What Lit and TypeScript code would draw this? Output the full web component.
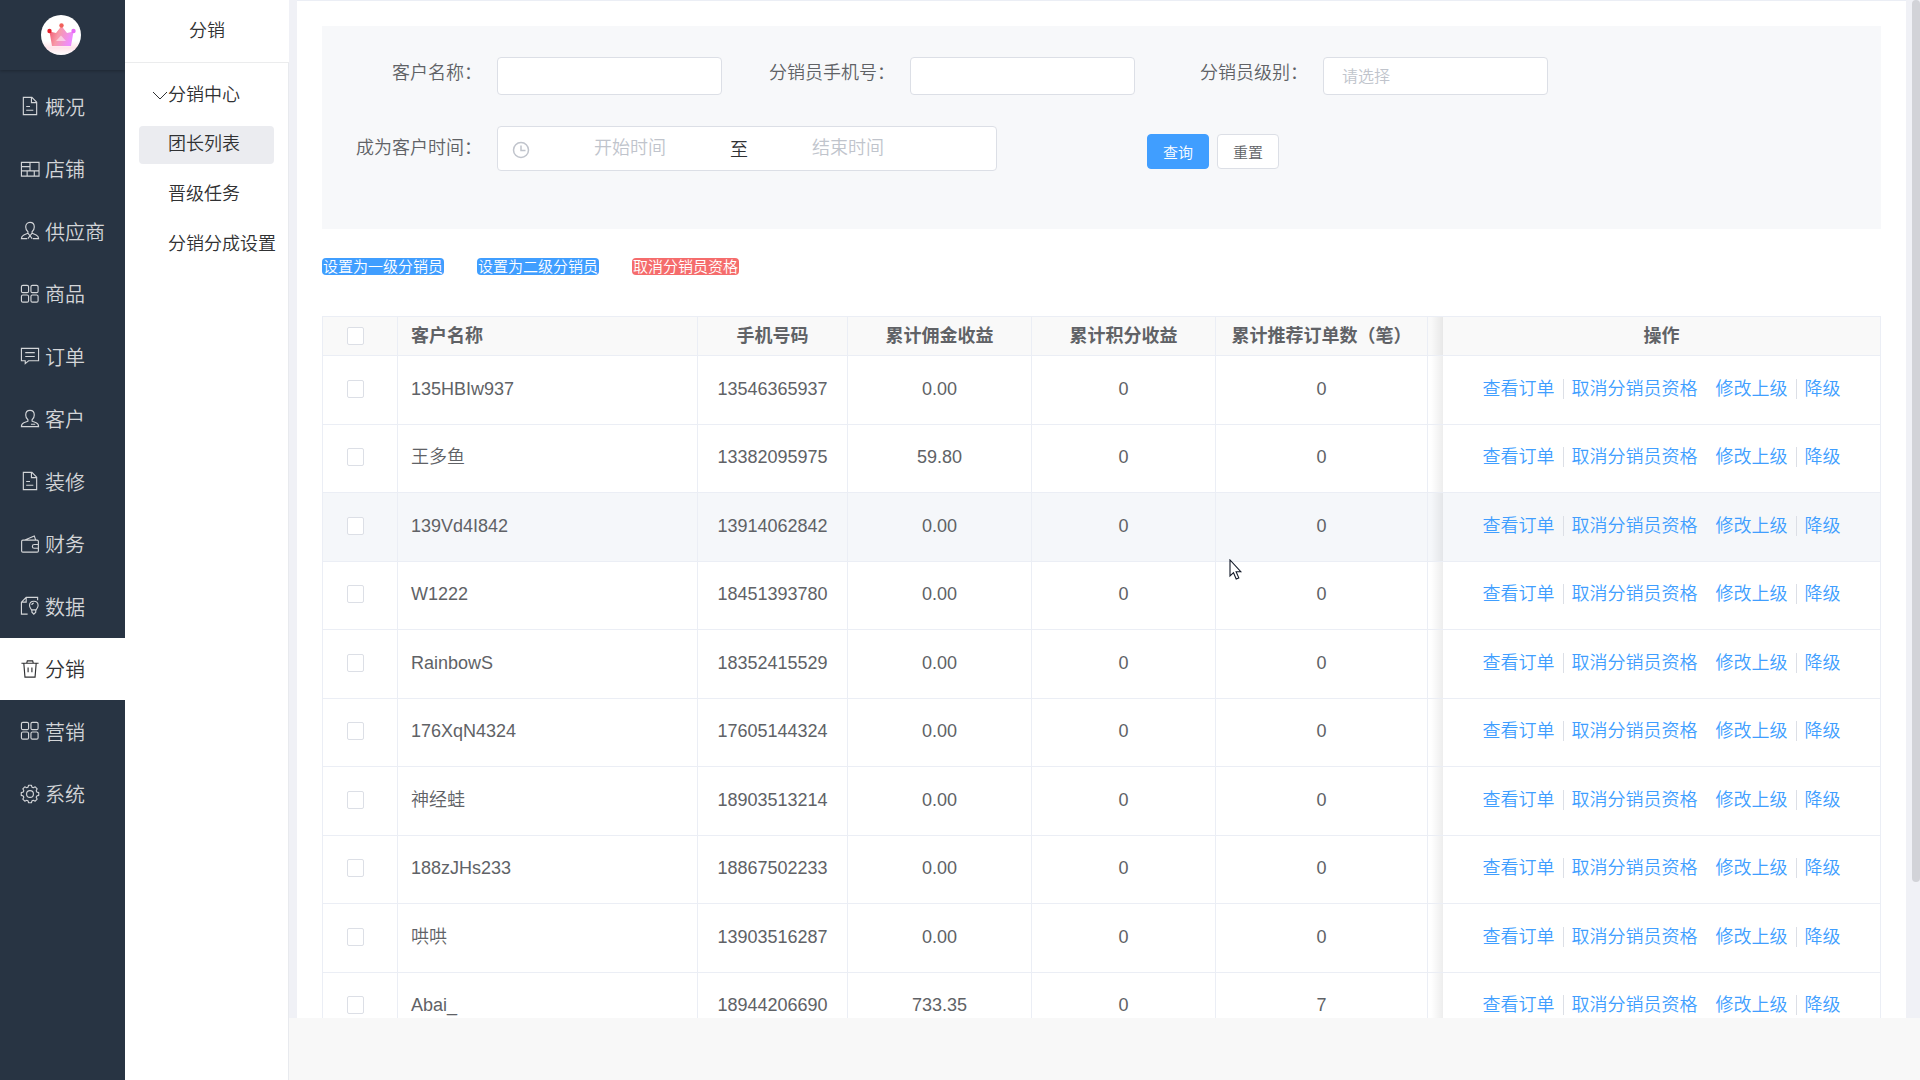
import { LitElement, html, css, svg, nothing } from "lit";
import { customElement } from "lit/decorators.js";
import { classMap } from "lit/directives/class-map.js";

/* Outline of an eight-toothed gear around (cx, cy). */
const gearPath = (cx: number, cy: number, outer: number, inner: number) => {
  const points: string[] = [];
  for (let tooth = 0; tooth < 8; tooth++) {
    for (const [angle, radius] of [[-9, outer], [9, outer], [17, inner], [28, inner]]) {
      const a = ((tooth * 45 + angle) * Math.PI) / 180;
      points.push(`${(cx + radius * Math.sin(a)).toFixed(2)} ${(cy - radius * Math.cos(a)).toFixed(2)}`);
    }
  }
  return `M${points.join("L")}z`;
};

const icons: Record<string, unknown> = {
  document: svg`<path d="M3.500 1.500h9l5 5v13h-14z"/><path d="M12 1.500v5.500h5.500M6.500 11h4M6.500 15h7.500"/>`,
  shop: svg`<path d="M1.500 3.500h18.500v14.500h-18.500zM1.500 8h9M1.500 12.500h18.500M10.500 3.500v9M7.500 12.500v5.500M15 12.500v5.500"/>`,
  supplier: svg`<path d="M10.500 1.500c3 0 4.500 2.200 4.500 4.800 0 2-.9 3.900-2.300 4.900v1.600l4.300 1.900c1.500.7 2.500 1.800 2.500 3.800h-6M10.500 1.500c-3 0-4.500 2.200-4.500 4.800 0 2 .9 3.900 2.300 4.900v1.600L4 14.700c-1.500.7-2.500 1.800-2.500 3.800h6M8.300 12.800l2.200 2.700 2.200-2.700M10.500 15.500l-2.200 3M10.500 15.500l2.200 3"/>`,
  grid: svg`<rect x="1.500" y="1.500" width="7.500" height="7.500" rx="1.500"/><rect x="11.500" y="1.500" width="7.500" height="7.500" rx="1.500"/><rect x="1.500" y="11.500" width="7.500" height="7.500" rx="1.500"/><rect x="11.500" y="11.500" width="7.500" height="7.500" rx="1.500"/>`,
  order: svg`<path d="M1.500 2.500h18v13h-10.500l-3.500 3v-3h-4zM5.500 7h10M5.500 11h10"/>`,
  customer: svg`<path d="M10.500 1.500c3 0 4.500 2.200 4.500 4.800 0 2-.9 3.900-2.300 4.900v1.600l4.300 1.700c1.500.6 2.500 1.500 2.500 4H1.500c0-2.500 1-3.400 2.500-4l4.300-1.700v-1.600C6.900 10.200 6 8.300 6 6.300c0-2.600 1.500-4.800 4.500-4.800zM11.500 16h4.500"/>`,
  wallet: svg`<path d="M3 6.500h15c.8 0 1.300.5 1.300 1.300v10c0 .8-.5 1.300-1.300 1.300h-15c-.8 0-1.300-.5-1.300-1.300v-10c0-.8.5-1.300 1.300-1.300zM4.500 6.500l10.500-4.500 1.500 4.500M19.300 11h-4.300c-2.700 0-2.700 4 0 4h4.300"/>`,
  data: svg`<path d="M8 19h-6.500V6.500l5-5h12v3M1.500 6.500h5v-5M14.500 5.500c2.700 0 4.500 2 4.500 4.400 0 2-1.200 3-2 4.600h-5c-.8-1.600-2-2.600-2-4.600 0-2.400 1.800-4.400 4.500-4.400zM12.500 14.500v2.500l2 2 2-2v-2.500M12.500 9.500c0-1 .8-2 2-2"/>`,
  trash: svg`<path d="M1.500 4.500h18M4 4.500l1.200 14.500h10.600l1.200-14.500M7 4.500l.7-2.500h5.600l.7 2.500M8.500 9v5M12.500 9v5"/>`,
  gear: svg`<path d=${gearPath(10.5, 10.5, 9.3, 7.4)} stroke-linejoin="round"/><circle cx="10.500" cy="10.500" r="3.600"/>`,
};

const menu = [
  { icon: "document", label: "概况" },
  { icon: "shop", label: "店铺" },
  { icon: "supplier", label: "供应商" },
  { icon: "grid", label: "商品" },
  { icon: "order", label: "订单" },
  { icon: "customer", label: "客户" },
  { icon: "document", label: "装修" },
  { icon: "wallet", label: "财务" },
  { icon: "data", label: "数据" },
  { icon: "trash", label: "分销", active: true },
  { icon: "grid", label: "营销" },
  { icon: "gear", label: "系统" },
];

const rows = [
  { name: "135HBIw937", phone: "13546365937", money: "0.00", orders: 0 },
  { name: "王多鱼", phone: "13382095975", money: "59.80", orders: 0 },
  { name: "139Vd4I842", phone: "13914062842", money: "0.00", orders: 0, hover: true },
  { name: "W1222", phone: "18451393780", money: "0.00", orders: 0 },
  { name: "RainbowS", phone: "18352415529", money: "0.00", orders: 0 },
  { name: "176XqN4324", phone: "17605144324", money: "0.00", orders: 0 },
  { name: "神经蛙", phone: "18903513214", money: "0.00", orders: 0 },
  { name: "188zJHs233", phone: "18867502233", money: "0.00", orders: 0 },
  { name: "哄哄", phone: "13903516287", money: "0.00", orders: 0 },
  { name: "Abai_", phone: "18944206690", money: "733.35", orders: 7 },
];

@customElement("side-menu")
class SideMenu extends LitElement {
  static styles = css`
    :host { display: flex; flex-direction: column; background: #283443; }
    .brand { display: flex; justify-content: center; align-items: center; height: 70px; padding-right: 3px; box-shadow: 0 1px 3px rgba(0, 0, 0, 0.25); }
    .logo { width: 40px; height: 40px; }
    .list { display: grid; grid-template-rows: repeat(12, 1fr); height: 750px; margin: 5px 0 0; padding: 0; list-style: none; }
    .link { display: flex; align-items: center; gap: 5px; height: 100%; padding-left: 20px; font-size: 20px; color: #d3d5d8; text-decoration: none; white-space: nowrap; }
    .link.active { background: #fff; color: #303133; }
    .icon { width: 20px; height: 20px; fill: none; stroke: currentColor; stroke-width: 1.2; }
  `;
  render() {
    return html`
      <div class="brand">
        <svg class="logo" viewBox="0 0 40 40" aria-hidden="true">
          <defs>
            <linearGradient id="crown" x1="0" y1="0" x2="1" y2="0.3">
              <stop offset="0" stop-color="#f0526a" />
              <stop offset="0.45" stop-color="#f79aa8" />
              <stop offset="1" stop-color="#ee8cff" />
            </linearGradient>
            <linearGradient id="glow" x1="0" y1="0" x2="0" y2="1">
              <stop offset="0.65" stop-color="#fff" />
              <stop offset="0.82" stop-color="#ffe4ea" />
              <stop offset="1" stop-color="#fff" />
            </linearGradient>
          </defs>
          <circle cx="20" cy="20" r="20" fill="url(#glow)" />
          <path d="M8.500 16.500l6.500 1.500 5.500-7 5.500 7 6.500-1.500-2.500 14.500h-19z" fill="url(#crown)" />
          <path d="M20 20.500l5 5.500H15z" fill="#fff" opacity="0.5" />
          <circle cx="8.500" cy="16" r="2.200" fill="#e8202c" />
          <circle cx="20.500" cy="10.500" r="2.200" fill="#f0605a" />
          <circle cx="32.500" cy="16" r="2.200" fill="#e76cf5" />
        </svg>
      </div>
      <ul class="list">
        ${menu.map(
          (m) => html`<li>
            <a href="#" class=${classMap({ link: true, active: !!m.active })}>
              <svg class="icon" viewBox="0 0 21 21" aria-hidden="true">${icons[m.icon]}</svg>${m.label}
            </a>
          </li>`
        )}
      </ul>
    `;
  }
}

@customElement("sub-menu")
class SubMenu extends LitElement {
  static styles = css`
    :host { display: flex; flex-direction: column; background: #fff; font-size: 18px; color: #303133; }
    .title { height: 62px; line-height: 62px; text-align: center; border-bottom: 1px solid #ebeced; }
    .body { flex: 1; padding: 13px 14px; border-right: 1px solid #e8eaee; }
    .group { display: flex; align-items: center; width: 100%; height: 38px; margin-bottom: 12px; padding: 0 0 4px 13px; border: 0; background: none; font: inherit; color: inherit; }
    .arrow { width: 16px; height: 16px; padding-top: 6px; fill: none; stroke: currentColor; }
    .item { display: block; height: 38px; margin-bottom: 12px; padding-left: 29px; line-height: 36px; border-radius: 4px; color: inherit; text-decoration: none; white-space: nowrap; }
    .item.active { background: #ebecf0; }
  `;
  render() {
    return html`
      <div class="title">分销</div>
      <div class="body">
        <button class="group" type="button">
          <svg class="arrow" viewBox="0 0 16 16" aria-hidden="true"><path d="M1 4l7 7 7-7" /></svg>分销中心
        </button>
        <a class="item active" href="#">团长列表</a>
        <a class="item" href="#">晋级任务</a>
        <a class="item" href="#">分销分成设置</a>
      </div>
    `;
  }
}

@customElement("search-panel")
class SearchPanel extends LitElement {
  static styles = css`
    :host { display: block; box-sizing: border-box; height: 203px; padding: 31px 0 0 22px; background: #f7f8fa; font-size: 18px; color: #606266; }
    .row { display: flex; }
    .dates { margin-top: 31px; }
    .field { display: flex; width: 413px; }
    .range-field { width: 803px; }
    .label { flex: none; width: 138px; padding-right: 15px; line-height: 32px; text-align: right; white-space: nowrap; }
    .dates .label { line-height: 44px; }
    .control { box-sizing: border-box; width: 225px; height: 38px; padding: 0 18px; border: 1px solid #dcdfe6; border-radius: 4px; background: #fff; font: inherit; font-size: 16px; color: #c0c4cc; appearance: none; outline: none; }
    .range { display: flex; align-items: center; box-sizing: border-box; width: 500px; height: 45px; padding: 0 48px 0 14px; border: 1px solid #dcdfe6; border-radius: 4px; background: #fff; }
    .clock { width: 18px; height: 18px; padding-top: 3px; fill: none; stroke: #c0c4cc; stroke-width: 1.5; }
    .time { flex: 1; width: 0; padding: 0; border: 0; outline: none; background: none; font: inherit; text-align: center; }
    .time::placeholder { color: #c0c4cc; opacity: 1; }
    .to { padding-bottom: 2px; color: #303133; }
    .actions { display: flex; gap: 8px; padding-top: 8px; }
    .btn { height: 35px; width: 62px; padding: 0; border: 1px solid #dcdfe6; border-radius: 4px; background: #fff; font: inherit; font-size: 15px; color: #606266; }
    .btn.primary { border-color: #409eff; background: #409eff; color: #fff; }
  `;
  render() {
    return html`
      <form>
        <div class="row">
          <div class="field">
            <label class="label" for="name">客户名称：</label><input class="control" id="name" type="text" />
          </div>
          <div class="field">
            <label class="label" for="phone">分销员手机号：</label><input class="control" id="phone" type="text" />
          </div>
          <div class="field">
            <label class="label" for="level">分销员级别：</label>
            <select class="control" id="level"><option>请选择</option></select>
          </div>
        </div>
        <div class="row dates">
          <div class="field range-field">
            <label class="label" for="start">成为客户时间：</label>
            <div class="range">
              <svg class="clock" viewBox="0 0 18 18" aria-hidden="true"><circle cx="9" cy="9" r="7.500" /><path d="M9 4.500v5h4.500" /></svg>
              <input class="time" id="start" type="text" placeholder="开始时间" />
              <span class="to">至</span>
              <input class="time" type="text" placeholder="结束时间" aria-label="结束时间" />
            </div>
          </div>
          <div class="actions">
            <button class="btn primary" type="button">查询</button>
            <button class="btn" type="button">重置</button>
          </div>
        </div>
      </form>
    `;
  }
}

@customElement("member-table")
class MemberTable extends LitElement {
  static styles = css`
    :host { display: block; font-size: 18px; color: #606266; }
    .table { width: 100%; height: 725px; table-layout: fixed; border-collapse: separate; border-spacing: 0; border-top: 1px solid #ebeef5; border-left: 1px solid #ebeef5; }
    .check { width: 75px; }
    .phone { width: 150px; }
    .sum { width: 184px; }
    .count { width: 212px; }
    .edge { width: 15px; }
    .ops { width: 438px; }
    .head { height: 39px; background: #f9f9f9; }
    .cell { box-sizing: border-box; padding: 0 0 2px; border-right: 1px solid #ebeef5; border-bottom: 1px solid #ebeef5; text-align: center; line-height: 24px; white-space: nowrap; }
    .head .cell { padding-bottom: 0; }
    .cell.left { padding-left: 13px; text-align: left; }
    .cell.tick { padding-left: 24px; text-align: left; }
    .cell.shade { border-right: 0; background: linear-gradient(to right, transparent 20%, rgba(0, 0, 0, 0.07)); }
    .cell.fixed { background: #fff; }
    .head .cell.fixed { background: #f9f9f9; }
    .hover .cell.fixed, .hover { background: #f5f7fa; }
    .box { display: block; width: 17px; height: 18px; margin: 0; border: 1px solid #dcdfe6; border-radius: 2px; background: #fff; appearance: none; }
    .links { display: flex; justify-content: center; align-items: center; }
    .link { color: #409eff; text-decoration: none; }
    .sep { width: 1px; height: 20px; margin: 0 8px; background: #dcdfe6; }
    .gap { margin-left: 18px; }
  `;
  render() {
    return html`
      <table class="table">
        <colgroup>
          <col class="check" /><col /><col class="phone" /><col class="sum" /><col class="sum" /><col class="count" /><col class="edge" /><col class="ops" />
        </colgroup>
        <thead>
          <tr class="head">
            <th class="cell tick"><input class="box" type="checkbox" aria-label="全选" /></th>
            <th class="cell left">客户名称</th>
            <th class="cell">手机号码</th>
            <th class="cell">累计佣金收益</th>
            <th class="cell">累计积分收益</th>
            <th class="cell">累计推荐订单数（笔）</th>
            <th class="cell shade"></th>
            <th class="cell fixed">操作</th>
          </tr>
        </thead>
        <tbody>
          ${rows.map(
            (r) => html`<tr class=${r.hover ? "hover" : nothing}>
              <td class="cell tick"><input class="box" type="checkbox" aria-label=${r.name} /></td>
              <td class="cell left">${r.name}</td>
              <td class="cell">${r.phone}</td>
              <td class="cell">${r.money}</td>
              <td class="cell">0</td>
              <td class="cell">${r.orders}</td>
              <td class="cell shade"></td>
              <td class="cell fixed">
                <div class="links">
                  <a class="link" href="#">查看订单</a><span class="sep"></span><a class="link" href="#">取消分销员资格</a
                  ><a class="link gap" href="#">修改上级</a><span class="sep"></span><a class="link" href="#">降级</a>
                </div>
              </td>
            </tr>`
          )}
        </tbody>
      </table>
    `;
  }
}

@customElement("app-root")
class AppRoot extends LitElement {
  static styles = css`
    :host { display: flex; position: relative; height: 100vh; overflow: hidden; background: #f8f8f8; font-family: "Liberation Sans", "Noto Sans CJK SC", sans-serif; font-weight: 350; }
    .side { flex: none; width: 125px; }
    .sub { flex: none; width: 164px; }
    .main { flex: 1; min-width: 0; display: flex; height: calc(100% - 62px); box-sizing: border-box; padding-left: 8px; background: #f0f1f6; overflow: hidden; }
    .card { flex: 1; min-width: 0; padding: 25px 25px 0; border-top: 1px solid #ebeef5; background: #fff; }
    .track { flex: none; width: 14px; display: flex; justify-content: flex-end; }
    .thumb { width: 8px; height: 882px; border-radius: 4px; background: #d2d3d8; }
    .tags { display: flex; gap: 33px; margin: 29px 0 41px; }
    .tag { height: 17px; padding: 0 1px; border: 0; border-radius: 4px; background: #409eff; font: inherit; font-size: 15px; line-height: 17px; color: #fff; white-space: nowrap; }
    .tag.danger { background: #f56c6c; }
    .pointer { position: absolute; left: 1229px; top: 559px; width: 14px; height: 22px; pointer-events: none; }
  `;
  render() {
    return html`
      <side-menu class="side"></side-menu>
      <sub-menu class="sub"></sub-menu>
      <main class="main">
        <div class="card">
          <search-panel></search-panel>
          <div class="tags">
            <button class="tag" type="button">设置为一级分销员</button>
            <button class="tag" type="button">设置为二级分销员</button>
            <button class="tag danger" type="button">取消分销员资格</button>
          </div>
          <member-table></member-table>
        </div>
        <div class="track"><div class="thumb"></div></div>
      </main>
      <svg class="pointer" viewBox="0 0 14 22" aria-hidden="true">
        <path d="M1 1v16l3.500-3.300 2.700 6.300 2.600-1.100-2.700-6.200h4.700z" fill="#fff" stroke="#111827" stroke-width="1.100" />
      </svg>
    `;
  }
}
